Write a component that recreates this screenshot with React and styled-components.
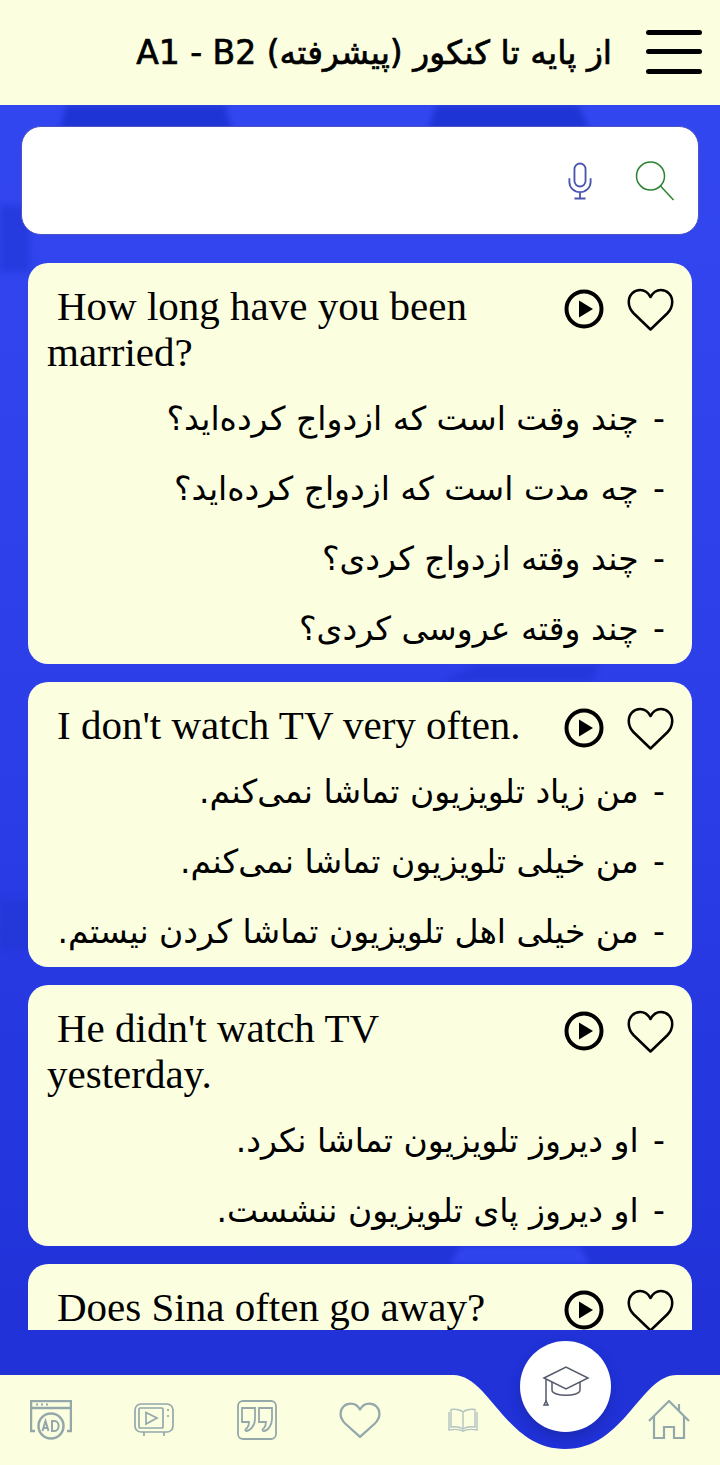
import React from "react";
import styled, { createGlobalStyle } from "styled-components";

const GlobalStyle = createGlobalStyle`
  html, body {
    margin: 0;
    padding: 0;
  }
  * {
    box-sizing: border-box;
  }
`;

const cards = [
  {
    title: "How long have you been married?",
    lines: [
      "چند وقت است که ازدواج کرده‌اید؟",
      "چه مدت است که ازدواج کرده‌اید؟",
      "چند وقته ازدواج کردی؟",
      "چند وقته عروسی کردی؟",
    ],
  },
  {
    title: "I don't watch TV very often.",
    lines: [
      "من زیاد تلویزیون تماشا نمی‌کنم.",
      "من خیلی تلویزیون تماشا نمی‌کنم.",
      "من خیلی اهل تلویزیون تماشا کردن نیستم.",
    ],
  },
  {
    title: "He didn't watch TV yesterday.",
    lines: ["او دیروز تلویزیون تماشا نکرد.", "او دیروز پای تلویزیون ننشست."],
  },
  { title: "Does Sina often go away?", lines: [] },
];

function PlayIcon() {
  return (
    <svg width="40" height="40" viewBox="0 0 40 40">
      <circle cx="20" cy="20" r="17.5" fill="none" stroke="#000" strokeWidth="4" />
      <path d="M15 11.5 L29 20 L15 28.5 Z" fill="#000" />
    </svg>
  );
}

function HeartIcon({ w = 47, h = 44, color = "#000", stroke = 2.6 }) {
  return (
    <svg width={w} height={h} viewBox="0 0 48 44" preserveAspectRatio="none">
      <path
        d="M24 41.5 L7 25.500 C3.500 22 1.800 18 1.800 14 C1.800 7 7 2 13.500 2 C18 2 21.500 4.500 24 9 C26.500 4.500 30 2 34.500 2 C41 2 46.200 7 46.200 14 C46.200 18 44.500 22 41 25.500 Z"
        fill="none"
        stroke={color}
        strokeWidth={stroke}
        strokeLinejoin="round"
      />
    </svg>
  );
}

function Card({ title, lines }) {
  return (
    <CardBox>
      <CardHead>
        <Title>{title}</Title>
        <CardActions>
          <PlayIcon />
          <HeartIcon />
        </CardActions>
      </CardHead>
      {lines.map((line) => (
        <Meaning key={line}>
          <Dash>-</Dash> {line}
        </Meaning>
      ))}
    </CardBox>
  );
}

export default function App() {
  return (
    <Page>
      <GlobalStyle />
      <Backdrop viewBox="0 0 720 1465">
        <path d="M66 105 H225 L232 130 H60 Z" fill="#1f34d4" />
        <path d="M436 105 H578 L590 130 H428 Z" fill="#1f34d4" />
        <path d="M0 205 H30 V272 H0 Z" fill="#2136d8" opacity="0.7" />
        <path d="M0 900 H30 V950 H0 Z" fill="#2033cf" opacity="0.5" />
        <path d="M480 664 H600 L590 682 H440 Z" fill="#2133d6" opacity="0.7" />
        <path d="M460 1246 H580 L590 1264 H450 Z" fill="#3044ee" />
      </Backdrop>
      <Header>
        <BurgerMenu>
          <span />
          <span />
          <span />
        </BurgerMenu>
        <HeaderTitle>از پایه تا کنکور (پیشرفته) A1 - B2</HeaderTitle>
      </Header>
      <SearchWrap>
        <SearchBox>
          <svg width="40" height="40" viewBox="0 0 40 40">
            <circle cx="15.500" cy="15" r="14" fill="none" stroke="#2c8230" strokeWidth="1.500" />
            <path d="M25.500 25 L38.500 39" stroke="#2c8230" strokeWidth="1.500" fill="none" />
          </svg>
          <svg width="24" height="40" viewBox="0 0 26 40">
            <rect x="7" y="1" width="12" height="25" rx="6" fill="none" stroke="#4a55b0" strokeWidth="2" />
            <path
              d="M1.500 17 V21 C1.500 27 6.500 32 13 32 C19.500 32 24.500 27 24.500 21 V17 M13 32 V39 M7 39 H19"
              fill="none"
              stroke="#4a55b0"
              strokeWidth="2"
            />
          </svg>
        </SearchBox>
      </SearchWrap>
      <CardList>
        {cards.map((card) => (
          <Card key={card.title} {...card} />
        ))}
      </CardList>
      <BottomNav>
        <NavShape viewBox="0 0 720 90">
          <path d="M0 0 H453 C490 0 505 74 565 74 C625 74 640 0 677 0 H720 V90 H0 Z" fill="#fbffe0" />
        </NavShape>
        <NavIcons>
          <NavSlot>
            <svg width="42" height="40" viewBox="0 0 42 40" fill="none" stroke="#94a8ac" strokeWidth="2">
              <path d="M5 31 H1 V1 H41 V31 H37 M1 8 H41" strokeWidth="2.500" />
              <circle cx="21" cy="26" r="12.500" strokeWidth="2.500" />
              <path d="M12.500 31 L15.500 21 L18.500 31 M13.500 28 H17.500 M22 21 V31 H24.500 C30 31 30 21 24.500 21 Z" />
              <path d="M6 4.500 H8 M11 4.500 H13 M16 4.500 H18" />
            </svg>
          </NavSlot>
          <NavSlot>
            <svg width="40" height="34" viewBox="0 0 40 34" fill="none" stroke="#94a8ac" strokeWidth="1.700">
              <rect x="1" y="1" width="38" height="28" rx="6" />
              <rect x="5" y="5" width="24" height="20" rx="1" />
              <path d="M12 9.500 L23 15 L12 21 Z" />
              <path d="M34 6 V8 M34 12 V14 M10 29 V33 M30 29 V33" />
            </svg>
          </NavSlot>
          <NavSlot>
            <svg width="40" height="40" viewBox="0 0 40 40" fill="none" stroke="#94a8ac" strokeWidth="1.800">
              <rect x="1" y="1" width="38" height="38" rx="5" />
              <path d="M5 8 H18 V19 C18 26 13 31 9 31 C8 31 8 29 10 28 C12 26 12 24 12 22 H5 Z" />
              <path d="M22 8 H35 V19 C35 26 30 31 27 31 C25 31 25 29 27 28 C29 26 29 24 29 22 H22 Z" />
            </svg>
          </NavSlot>
          <NavSlot>
            <HeartIcon w={42} h={37} color="#94a8ac" stroke={2.600} />
          </NavSlot>
          <NavSlot>
            <svg width="30" height="24" viewBox="0 0 30 24" fill="none" stroke="#b4c4c2" strokeWidth="1.400">
              <path d="M15 4 C12 1.500 7 1 3 1.500 V19 C7 18.500 12 19 15 21 C18 19 23 18.500 27 19 V1.500 C23 1 18 1.500 15 4 Z M15 4 V21" />
              <path d="M1 4 V22 C6 21 11 21 15 23 C19 21 24 21 29 22 V4" />
            </svg>
          </NavSlot>
          <NavSlot />
          <NavSlot>
            <svg width="42" height="40" viewBox="0 0 42 40" fill="none" stroke="#94a8ac" strokeWidth="2.200">
              <path d="M1 21 L21 1 L41 21 M31 4 V11" />
              <path d="M6 16 V38 H16 V27 H26 V38 H36 V16" />
            </svg>
          </NavSlot>
        </NavIcons>
        <FloatingButton>
          <svg width="48" height="42" viewBox="0 0 48 42" fill="none" stroke="#555a6a" strokeWidth="1.500">
            <path d="M2 12 L24 1 L46 12 L24 23 Z" />
            <path d="M10 16 V24 C10 31 38 31 38 24 V16" />
            <path d="M4 13 V35" />
            <path d="M4 35 L2 39 H6 Z" />
          </svg>
        </FloatingButton>
      </BottomNav>
    </Page>
  );
}

const Page = styled.div`
  position: relative;
  width: 720px;
  height: 1465px;
  display: flex;
  flex-direction: column;
  overflow: hidden;
  background: linear-gradient(180deg, #3448f2 0%, #2c3ee8 50%, #2032d8 90%);
`;
const Backdrop = styled.svg`
  position: absolute;
  inset: 0;
  width: 100%;
  height: 100%;
  filter: blur(3px);
`;
const Header = styled.header`
  position: relative;
  flex: none;
  height: 105px;
  display: flex;
  flex-direction: row-reverse;
  justify-content: flex-start;
  align-items: center;
  padding-right: 18px;
  background: #fbffe0;
`;
const BurgerMenu = styled.div`
  width: 56px;
  display: flex;
  flex-direction: column;
  gap: 14.500px;
  margin-left: 34px;
  margin-top: -2px;

  span {
    display: block;
    height: 5px;
    border-radius: 3px;
    background: #000;
  }
`;
const HeaderTitle = styled.div`
  direction: rtl;
  font-family: "DejaVu Sans", sans-serif;
  font-size: 33px;
  -webkit-text-stroke: 0.7px #000;
  color: #000;
`;
const SearchWrap = styled.div`
  position: relative;
  flex: none;
  height: 158px;
  padding: 21px 21px 0;
`;
const SearchBox = styled.div`
  height: 109px;
  display: flex;
  flex-direction: row-reverse;
  align-items: center;
  gap: 43px;
  padding-right: 23px;
  background: #fff;
  border: 1px solid #4a55c0;
  border-radius: 20px;
`;
const CardList = styled.div`
  position: relative;
  flex: none;
  height: 1067px;
  padding: 0 28px;
  display: flex;
  flex-direction: column;
  gap: 18px;
  overflow: hidden;
`;
const CardBox = styled.div`
  flex: none;
  min-height: 100px;
  padding-top: 20px;
  background: #fbffe0;
  border-radius: 20px;
`;
const CardHead = styled.div`
  display: flex;
  align-items: flex-start;
  justify-content: space-between;
  padding: 0 18px 9px 19px;
`;
const Title = styled.div`
  width: 490px;
  font-family: "Liberation Serif", serif;
  font-size: 41px;
  line-height: 46px;
  text-indent: 10px;
  color: #000;
`;
const CardActions = styled.div`
  flex: none;
  height: 46px;
  display: flex;
  align-items: flex-start;
  gap: 23px;
  padding-top: 6px;

  svg:last-child {
    margin-top: -1px;
  }
`;
const Meaning = styled.div`
  direction: rtl;
  height: 70px;
  padding-right: 27px;
  font-family: "DejaVu Sans", sans-serif;
  font-size: 33px;
  line-height: 70px;
  white-space: nowrap;
  color: #000;
`;
const Dash = styled.span`
  margin-left: 4px;
`;
const BottomNav = styled.nav`
  position: relative;
  flex: none;
  margin-top: 45px;
  height: 90px;
`;
const NavShape = styled.svg`
  position: absolute;
  inset: 0;
  width: 100%;
  height: 100%;
`;
const NavIcons = styled.div`
  position: relative;
  height: 100%;
  display: grid;
  grid-template-columns: repeat(7, 1fr);
`;
const NavSlot = styled.div`
  display: flex;
  align-items: center;
  justify-content: center;
`;
const FloatingButton = styled.div`
  position: absolute;
  left: 520px;
  top: -34px;
  width: 91px;
  height: 91px;
  display: flex;
  align-items: center;
  justify-content: center;
  background: #fff;
  border-radius: 50%;
  box-shadow: 0 6px 12px rgba(20, 30, 120, 0.35);
`;
